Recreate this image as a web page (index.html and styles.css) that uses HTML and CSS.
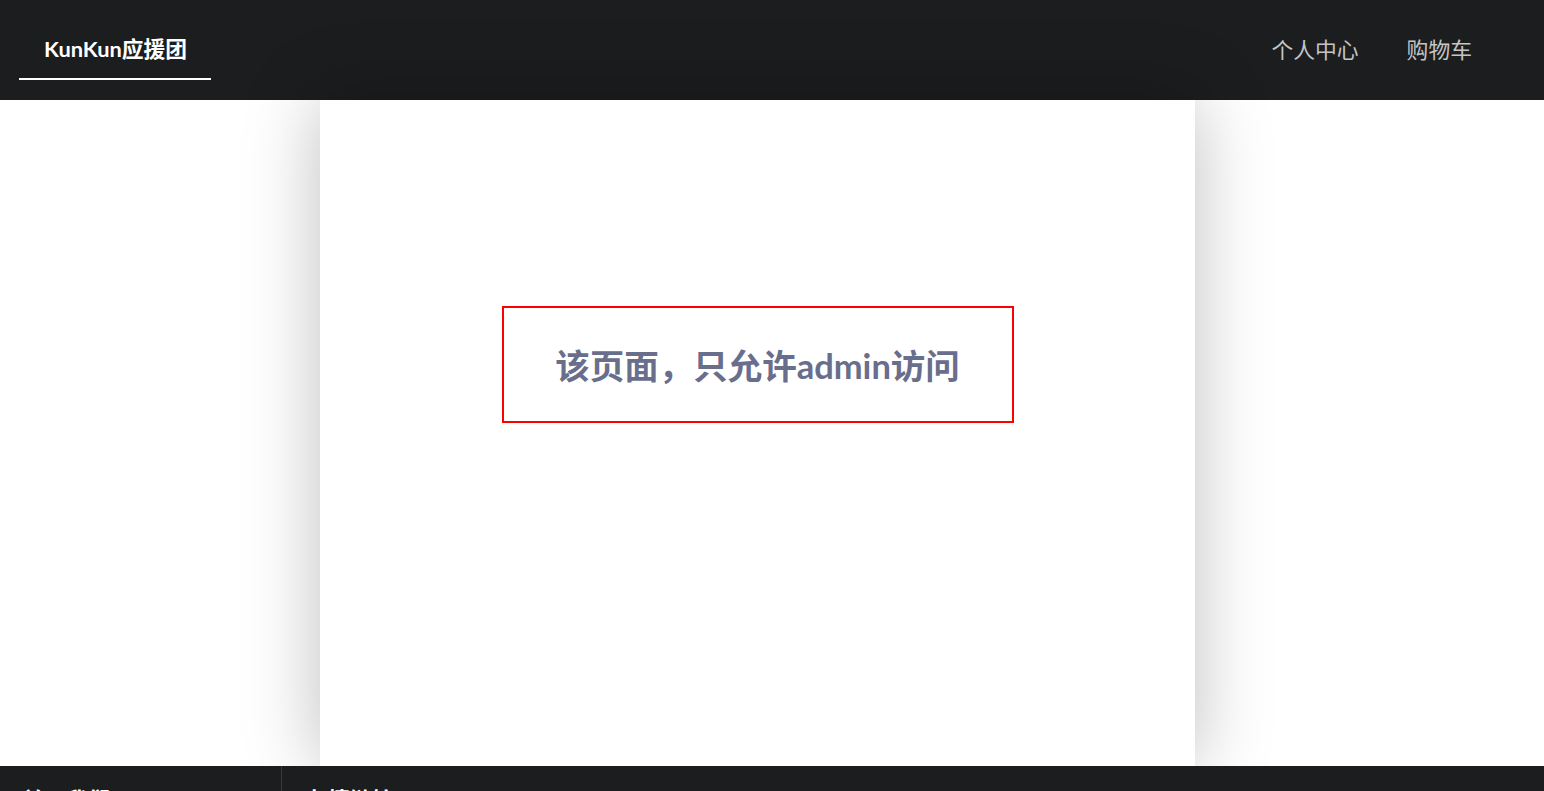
FILE: index.html
```html
<!DOCTYPE html>
<html lang="zh-CN">
<head>
<meta charset="utf-8">
<title>KunKun应援团</title>
<link rel="stylesheet" href="styles.css">
</head>
<body>
<header class="topbar">
  <a class="brand">KunKun应援团</a>
  <nav class="nav">
    <a class="nav-link">个人中心</a>
    <a class="nav-link">购物车</a>
  </nav>
</header>
<main class="stage">
  <section class="card">
    <div class="notice">该页面，只允许admin访问</div>
  </section>
</main>
<footer class="footer">
  <div class="footer-col footer-col-first">
    <h3 class="footer-title">关于我们</h3>
  </div>
  <div class="footer-col">
    <h3 class="footer-title">友情链接</h3>
  </div>
</footer>
</body>
</html>
```
FILE: styles.css
```css
* { box-sizing: border-box; }
html, body { margin: 0; padding: 0; }
body {
  font-family: Lato, "Noto Sans CJK SC", sans-serif;
  background: #ffffff;
}
.topbar {
  height: 100px;
  background: #1c1d1f;
  display: flex;
  align-items: flex-start;
  justify-content: space-between;
  padding: 0 72px 0 19px;
}
.brand {
  display: block;
  width: 192px;
  margin-top: 20px;
  padding: 14px 0 14px 25px;
  color: #ffffff;
  font-weight: 700;
  font-size: 21.8px;
  line-height: 30px;
  border-bottom: 2px solid #ffffff;
}
.nav {
  display: flex;
  gap: 48px;
  padding-top: 35px;
}
.nav-link {
  color: #c4c4c4;
  font-size: 21.8px;
  line-height: 30px;
}
.stage {
  display: flex;
  justify-content: center;
  padding-right: 29px;
}
.card {
  width: 875px;
  height: 666px;
  background: #fff;
  box-shadow: 0 0 70px rgba(0, 0, 0, 0.26);
  display: flex;
  justify-content: center;
  align-items: flex-start;
  padding-top: 206px;
  position: relative;
  z-index: 1;
}
.notice {
  width: 512px;
  height: 117px;
  border: 2px solid #ff0000;
  display: flex;
  align-items: center;
  justify-content: center;
  padding-bottom: 2px;
  color: #696e8c;
  font-weight: 700;
  font-size: 34.5px;
}
.footer {
  position: relative;
  z-index: 2;
  background: #1c1d1f;
  display: flex;
  height: 200px;
}
.footer-col {
  padding: 19px 22px;
  width: 282px;
  border-right: 1px solid #3a3b3d;
}
.footer-col + .footer-col { border-right: none; padding-left: 24px; }
.footer-title {
  margin: 0;
  color: #fff;
  font-size: 22px;
  line-height: 30px;
  font-weight: 700;
}
```
